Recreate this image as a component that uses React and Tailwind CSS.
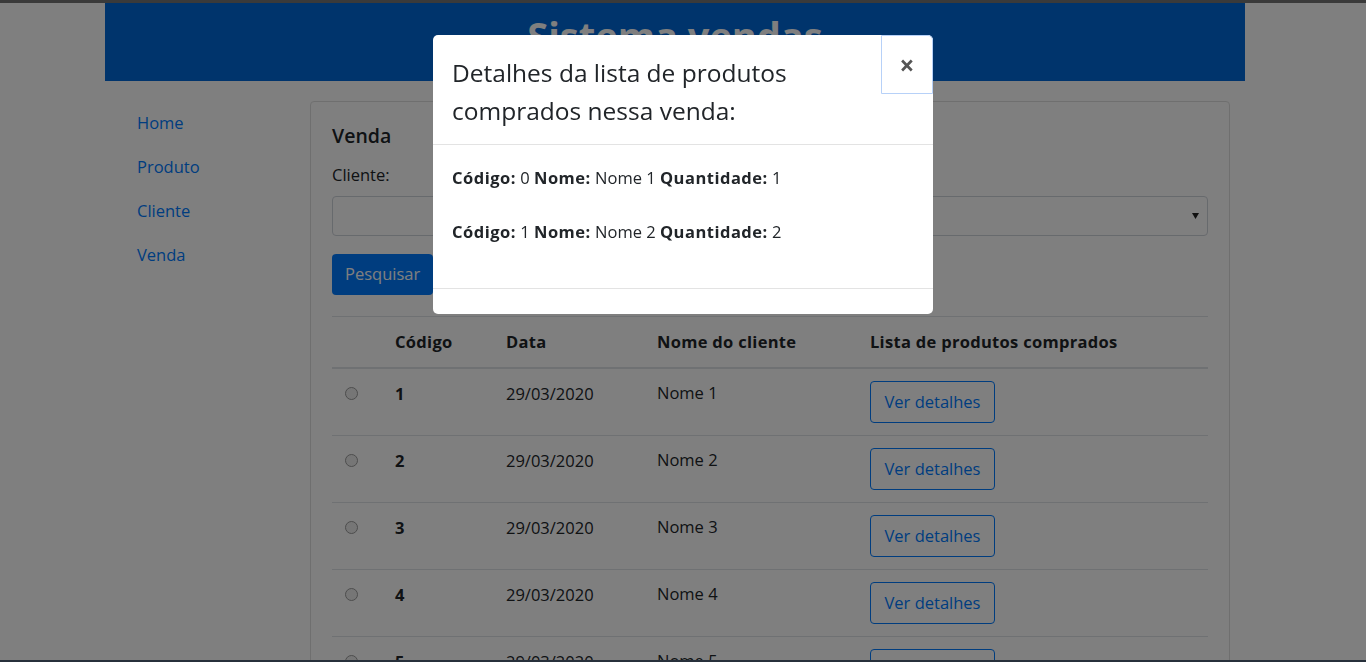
import React from "react";

const rows = [1, 2, 3, 4, 5];

export default function App() {
  return (
    <div className="relative h-[662px] overflow-hidden bg-white font-['Open_Sans',sans-serif] text-[#212529]">
      <div className="h-[3px] bg-[#777]" />
      <div className="w-[1350px]">
        <div className="mx-auto w-[1140px]">
          <header className="flex h-[78px] justify-center bg-[#0069d9] pt-[8px]">
            <h1 className="text-[38px] font-bold leading-[48px] text-white">Sistema vendas</h1>
          </header>
          <div className="mt-[20px] flex">
            <nav className="flex w-[190px] flex-col pl-[32px] text-[16.5px] text-[#007bff]">
              {["Home", "Produto", "Cliente", "Venda"].map((l) => (
                <a key={l} className="flex h-[44px] items-center">{l}</a>
              ))}
            </nav>
            <div className="ml-[15px] w-[920px] rounded-[4px] border border-[#dfdfdf] px-[21px] pt-[20px]">
              <div className="h-[28px] text-[19.5px] font-semibold leading-[28px]">Venda</div>
              <div className="mt-[13px] h-[24px] text-[16.5px] leading-[24px]">Cliente:</div>
              <div className="relative mt-[9px] h-[40px] rounded-[4px] border border-[#ced4da]">
                <svg className="absolute right-[8px] top-[16px]" width="7" height="6" viewBox="0 0 7 6">
                  <path d="M0 0 L7 0 L3.5 6 Z" fill="#222" />
                </svg>
              </div>
              <button className="mt-[18px] flex h-[41px] items-center rounded-[4px] bg-[#007bff] px-[13px] text-[16.5px] text-white">
                Pesquisar
              </button>
              <div className="mt-[21px] border-t border-[#dee2e6]">
                <div className="grid h-[52px] grid-cols-[51px_111px_151px_213px_1fr] items-center border-b-2 border-[#dee2e6] text-[16.5px] font-bold tracking-[0.3px]">
                  <div />
                  <div className="px-3">Código</div>
                  <div className="px-3">Data</div>
                  <div className="px-3">Nome do cliente</div>
                  <div className="px-3">Lista de produtos comprados</div>
                </div>
                {rows.map((r) => (
                  <div key={r} className="grid h-[67px] grid-cols-[51px_111px_151px_213px_1fr] border-b border-[#dee2e6] text-[16.5px]">
                    <div className="flex pl-[13px] pt-[18px]">
                      <span className="block h-[13px] w-[13px] rounded-full border border-[#9a9a9a] bg-[#ededed]" />
                    </div>
                    <div className="px-3 pt-[13px] font-bold leading-[24px]">{r}</div>
                    <div className="px-3 pt-[13px] leading-[24px]">29/03/2020</div>
                    <div className="px-3 pt-[12px] leading-[24px]">Nome {r}</div>
                    <div className="px-3 pt-[12px]">
                      <button className="h-[42px] w-[125px] rounded-[4px] border border-[#007bff] text-[16.5px] text-[#007bff]">
                        Ver detalhes
                      </button>
                    </div>
                  </div>
                ))}
              </div>
            </div>
          </div>
        </div>
      </div>

      <div className="fixed inset-0 bg-black/50" />
      <div className="fixed left-0 right-0 top-0 h-[3px] bg-[#3a3a3a]" />
      <div className="fixed bottom-0 left-0 right-0 h-[2px] bg-[#27303b]" />

      <div className="fixed inset-0 flex justify-center pt-[35px]">
        <div className="h-[279px] w-[500px] overflow-hidden rounded-[5px] bg-white">
          <div className="relative border-b border-[#e3e3e3] pb-[14px] pl-[19px] pr-[60px] pt-[19px]">
            <h5 className="text-[24.5px] font-medium leading-[38px] text-[#212529]">
              Detalhes da lista de produtos comprados nessa venda:
            </h5>
            <button className="absolute right-0 top-0 flex h-[59px] w-[52px] items-center justify-center rounded-tr-[5px] border border-[#b7d1f8] text-[26px] font-bold leading-none text-[#555]">
              ×
            </button>
          </div>
          <div className="h-[143px] px-[19px] pt-[21px] text-[16.5px] leading-[24px]">
            <p>
              <b className="tracking-[0.5px]">Código:</b> 0 <b className="tracking-[0.5px]">Nome:</b> Nome 1{" "}
              <b className="tracking-[0.5px]">Quantidade:</b> 1
            </p>
            <p className="mt-[30px]">
              <b className="tracking-[0.5px]">Código:</b> 1 <b className="tracking-[0.5px]">Nome:</b> Nome 2{" "}
              <b className="tracking-[0.5px]">Quantidade:</b> 2
            </p>
          </div>
          <div className="h-[25px] border-t border-[#e3e3e3]" />
        </div>
      </div>
    </div>
  );
}
